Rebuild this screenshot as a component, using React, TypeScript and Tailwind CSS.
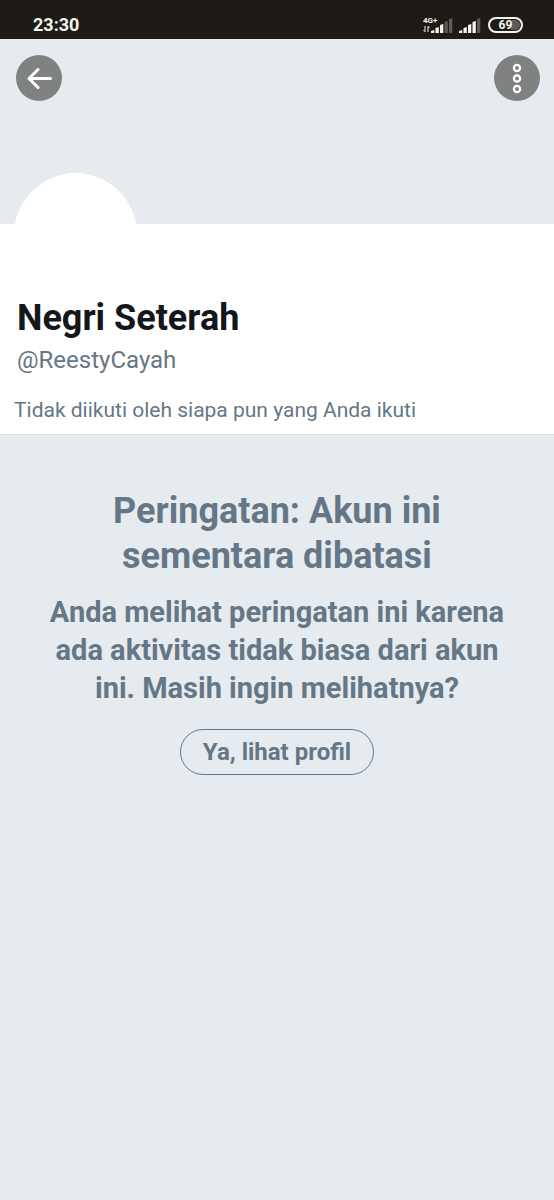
import React from "react";

const BARS = [
  { x: 0, height: 3 },
  { x: 4.5, height: 6 },
  { x: 9, height: 9 },
  { x: 13.5, height: 12 },
  { x: 18, height: 15 },
];

const SignalBars = ({ active }: { active: number }) => {
  return (
    <svg width="22" height="16" viewBox="0 0 22 16" aria-hidden="true">
      {BARS.map((bar, index) => (
        <path
          key={bar.x}
          d={`M${bar.x} 16v${1 - bar.height}l3.3-1V16z`}
          fill={index < active ? "#f4f3f0" : "#5d5b57"}
        />
      ))}
    </svg>
  );
};

const StatusBar = () => {
  return (
    <div className="flex h-[39px] items-center justify-between bg-[#1e1a15] pt-[10px] pr-[31px] pl-[33px] text-[#f4f3f0]">
      <span className="text-[18px] leading-[28px] font-bold">23:30</span>
      <div className="flex items-center">
        <div className="flex items-end">
          <div className="flex w-[8px] flex-col">
            <span className="text-[8px] leading-[8px] font-bold">4G+</span>
            <svg width="7" height="8" viewBox="0 0 7 8" fill="none" stroke="#f4f3f0" aria-hidden="true">
              <path d="M2 1v5.5M.5 5L2 6.8M5 7V1.5M6.5 3L5 1.2" />
            </svg>
          </div>
          <SignalBars active={3} />
        </div>
        <div className="ml-[6px]">
          <SignalBars active={4} />
        </div>
        <div className="ml-[7px] flex h-4 w-[35px] items-center justify-center rounded-full border-2 border-[#f4f3f0] p-px">
          <span className="flex h-full w-full items-center justify-center rounded-full bg-linear-to-r from-transparent from-68% to-[#5d5b57] to-68% text-[12px] leading-[12px] font-bold">
            69
          </span>
        </div>
      </div>
    </div>
  );
};

const Banner = () => {
  return (
    <header className="flex h-[185px] items-start justify-between pt-[16px] pr-[14px] pl-[16px]">
      <button
        aria-label="Kembali"
        className="flex size-[46px] items-center justify-center rounded-full bg-[#7f8281]"
      >
        <svg width="26" height="22" viewBox="0 0 26 22" fill="none" stroke="#fff" strokeWidth="3" strokeLinecap="round" strokeLinejoin="round">
          <path d="M24.5 11.5H3M12 2.5L3 11.5l9 9" />
        </svg>
      </button>
      <button
        aria-label="Opsi lainnya"
        className="flex size-[46px] items-center justify-center rounded-full bg-[#7f8281]"
      >
        <svg width="10" height="32" viewBox="0 0 10 32" fill="none" stroke="#fff" strokeWidth="2.3">
          <circle cx="5" cy="6" r="3.1" />
          <circle cx="5" cy="16.5" r="3.1" />
          <circle cx="5" cy="27" r="3.1" />
        </svg>
      </button>
    </header>
  );
};

const ProfileInfo = () => {
  return (
    <section className="flex flex-col border-b border-[#d9dfe3] bg-white px-[14px] pb-[12px]">
      <div className="-mt-[51px] size-[123px] rounded-full bg-white" />
      <h1 className="pl-[3px] text-[36px] leading-[44px] font-bold text-[#14171a]">Negri Seterah</h1>
      <p className="pl-[3px] text-[24px] leading-[40px] text-[#657786]">@ReestyCayah</p>
      <p className="mt-[18px] text-[21px] leading-[24px] text-[#657786]">
        Tidak diikuti oleh siapa pun yang Anda ikuti
      </p>
    </section>
  );
};

const AccountWarning = () => {
  return (
    <section className="flex flex-col items-center px-[40px] pt-[54px] text-center font-bold text-[#657786]">
      <h2 className="max-w-[400px] text-[36px] leading-[45px]">Peringatan: Akun ini sementara dibatasi</h2>
      <p className="mt-[14px] max-w-[474px] text-[29px] leading-[38px]">
        Anda melihat peringatan ini karena ada aktivitas tidak biasa dari akun ini. Masih ingin melihatnya?
      </p>
      <button className="mt-[22px] h-[46px] rounded-full border border-[#657786] px-[22px] text-[24px] leading-[44px]">
        Ya, lihat profil
      </button>
    </section>
  );
};

const App = () => {
  return (
    <div className="min-h-screen bg-[#e6ebef] font-[Roboto,sans-serif]">
      <StatusBar />
      <Banner />
      <main>
        <ProfileInfo />
        <AccountWarning />
      </main>
    </div>
  );
};

export default App;
